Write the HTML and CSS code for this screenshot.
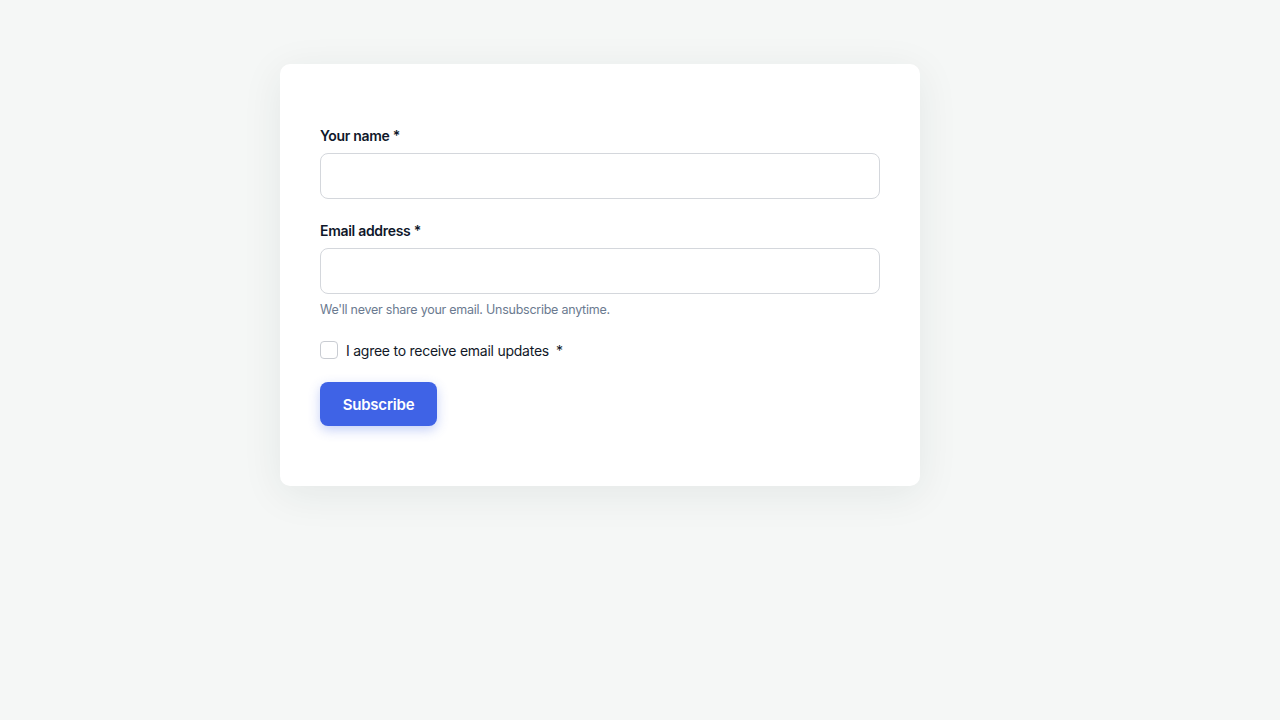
FILE: index.html
```html
<!DOCTYPE html>
<html lang="en">
<head>
<meta charset="utf-8">
<title>Subscribe</title>
<link rel="stylesheet" href="styles.css">
</head>
<body>
<main class="page">
  <form class="card">
    <div class="field">
      <label class="label" for="name">Your name *</label>
      <input class="input" id="name" type="text">
    </div>
    <div class="field">
      <label class="label" for="email">Email address *</label>
      <input class="input" id="email" type="email">
      <p class="hint">We'll never share your email. Unsubscribe anytime.</p>
    </div>
    <label class="check">
      <span class="box"></span>
      <span class="check-text">I agree to receive email updates</span>
      <span class="req">*</span>
    </label>
    <button class="btn" type="button">Subscribe</button>
  </form>
</main>
</body>
</html>
```
FILE: styles.css
```css
* { box-sizing: border-box; }
html, body {
  margin: 0;
  padding: 0;
  background: #f5f7f6;
  font-family: Inter, "Noto Sans", sans-serif;
  color: #111827;
}
.page {
  display: flex;
  align-items: flex-start;
  min-height: 100vh;
  padding: 64px 0 0 280px;
}
.card {
  width: 640px;
  background: #ffffff;
  border-radius: 10px;
  padding: 62px 40px 60px;
  box-shadow: 0 8px 40px rgba(30, 50, 45, 0.08);
  display: flex;
  flex-direction: column;
}
.field {
  display: flex;
  flex-direction: column;
  margin-bottom: 22px;
}
.label {
  font-size: 14px;
  line-height: 20px;
  font-weight: 600;
  letter-spacing: -0.3px;
  color: #0f172a;
  margin-bottom: 7px;
}
.input {
  height: 46px;
  border: 1px solid #d4d7dc;
  border-radius: 8px;
  background: #fff;
  font: inherit;
  padding: 0 12px;
}
.hint {
  margin: 7px 0 0;
  font-size: 12.5px;
  line-height: 18px;
  color: #6b7a90;
  letter-spacing: -0.25px;
}
.check {
  display: flex;
  align-items: center;
  height: 18px;
  margin-top: 0;
  margin-bottom: 23px;
}
.box {
  width: 18px;
  height: 18px;
  border: 1px solid #c9ccd2;
  border-radius: 4px;
  background: #fff;
  margin-right: 8px;
}
.check-text {
  font-size: 14px;
  letter-spacing: -0.25px;
  color: #111827;
}
.req {
  font-size: 14px;
  margin-left: 7px;
  color: #111827;
}
.btn {
  align-self: flex-start;
  width: 117px;
  height: 44px;
  border: none;
  border-radius: 8px;
  background: #3f63e6;
  color: #fff;
  font-family: inherit;
  font-size: 15px;
  font-weight: 600;
  letter-spacing: -0.2px;
  box-shadow: 0 4px 12px rgba(63, 99, 230, 0.3);
}
```
